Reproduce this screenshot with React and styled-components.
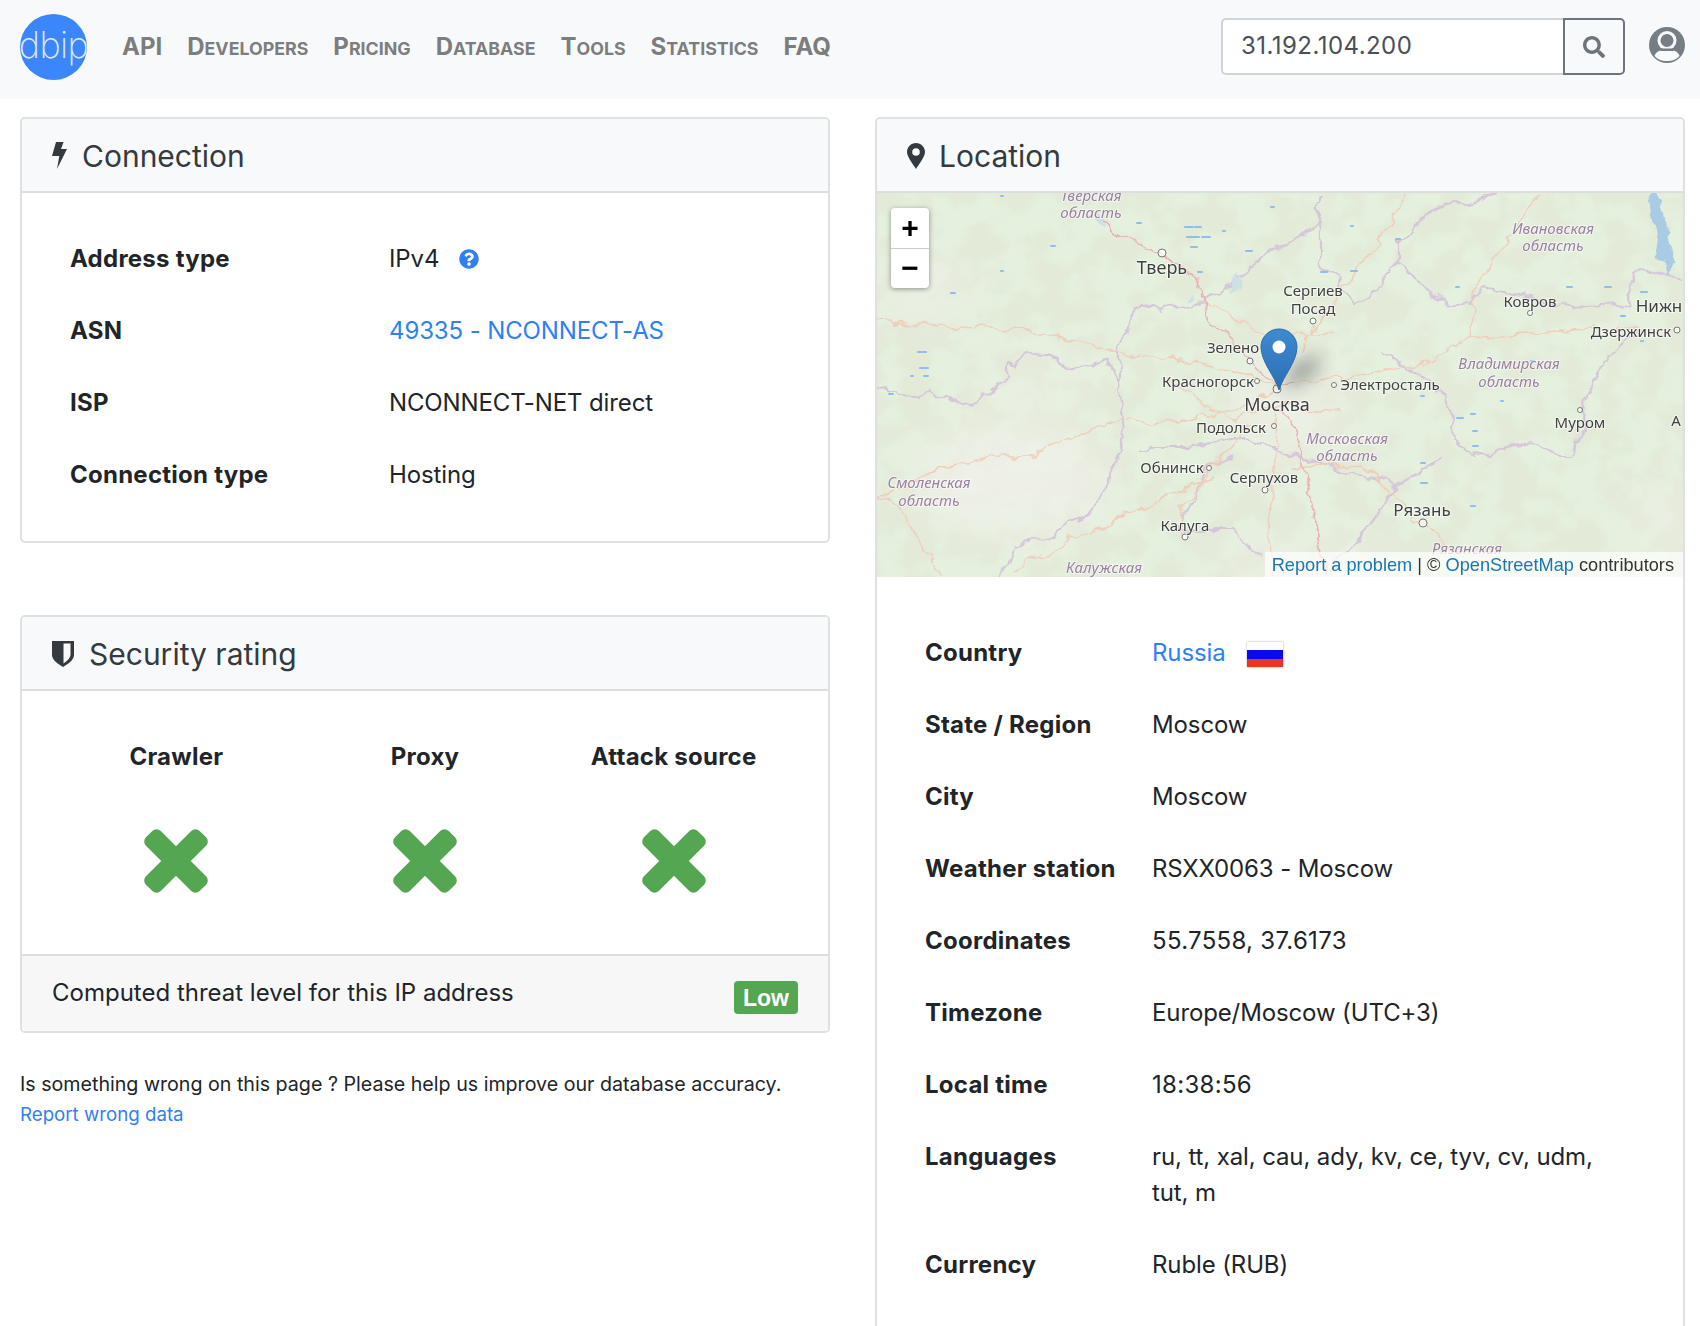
import React from "react";
import styled, { createGlobalStyle } from "styled-components";
import { FaSearch, FaQuestionCircle } from "react-icons/fa";

const Global = createGlobalStyle`
  html, body { margin: 0; padding: 0; background: #fff; }
  body { font-family: Inter, "Liberation Sans", sans-serif; font-size: 24px; line-height: 36px; color: #212529; height: 1326px; overflow: hidden; }
  * { box-sizing: border-box; }
`;

const Navbar = styled.header`
  height: 99px; background: #f8f9fa; display: flex; align-items: center; padding: 0 15px 0 20px;
`;
const Logo = styled.div`
  width: 67px; height: 66px; margin-top: -5px; border-radius: 50%; background: #3b86fb; color: #dfeaff;
  font-size: 36px; font-weight: 200; display: flex; align-items: center; justify-content: center; padding-bottom: 4px; overflow: hidden; flex: none; letter-spacing: -0.6px;
`;
const NavLinks = styled.nav`
  display: flex; gap: 25px; margin-left: 35px; margin-top: -3px; flex: 1; align-items: baseline;
`;
const NavLink = styled.a`
  font-weight: 700; color: #7c7d7e; text-transform: uppercase; font-size: ${(p) => (p.$caps ? 24 : 17.8)}px;
  &::first-letter { font-size: 24px; }
`;
const Search = styled.form`
  display: flex; height: 57px; margin-top: -7px; width: 404px;
`;
const SearchInput = styled.div`
  flex: 1; background: #fff; border: 2px solid #ced4da; border-right: 0; border-radius: 5px 0 0 5px;
  padding: 0 18px; color: #495057; line-height: 51px; letter-spacing: 0.45px;
`;
const SearchButton = styled.div`
  width: 62px; border: 2px solid #6c757d; border-radius: 0 5px 5px 0; display: flex; align-items: center; justify-content: center;
  color: #6c757d; padding-top: 2px;
`;
const Avatar = styled.svg`
  width: 36px; height: 36px; margin-left: 24px; margin-top: -9px; flex: none;
`;

const Main = styled.main`
  display: grid; grid-template-columns: 810px 810px; column-gap: 45px; padding: 18px 15px 0 20px;
`;
const Column = styled.section`
  display: flex; flex-direction: column; min-width: 0;
`;
const Card = styled.article`
  border: 2px solid #dfe0e1; border-radius: 5px; background: #fff; overflow: hidden;
  ${(p) => p.$tall && "height: 1300px;"}
  ${(p) => p.$spaced && "margin-top: 72px;"}
`;
const CardHeader = styled.div`
  height: 74px; background: #f8f9fa; border-bottom: 2px solid #dcdddf; display: flex; align-items: center; padding: 1px 30px 0; gap: ${(p) => p.$gap}px;
`;
const CardTitle = styled.h5`
  margin: 0; font-size: 30px; line-height: 36px; font-weight: 400; color: #343a40;
`;
const CardBody = styled.div`
  padding: 30px;
`;
const InfoBody = styled.div`
  padding: 40px 30px 0;
`;
const InfoRow = styled.div`
  display: grid; grid-template-columns: ${(p) => p.$label}px 1fr; padding: 18px; letter-spacing: -0.12px;
`;
const Label = styled.div`
  font-weight: 700; letter-spacing: 0.25px;
`;
const Value = styled.div`
  display: flex; align-items: center; gap: ${(p) => p.$gap}px;
`;
const NumberValue = styled.span`
  letter-spacing: 0.3px;
`;
const ValueLink = styled.a`
  color: #2f7ff5;
`;
const HelpIcon = styled(FaQuestionCircle)`
  color: #2f7ff5; width: 20px; height: 20px;
`;
const Flag = styled.div`
  width: 36px; height: 25px; box-shadow: 0 0 2px rgba(0,0,0,.35); display: flex; flex-direction: column; margin-top: 3px;
`;
const FlagBand = styled.div`
  flex: 1; background: ${(p) => p.$c};
`;
const RatingGrid = styled.div`
  display: grid; grid-template-columns: repeat(3, 1fr);
`;
const RatingHead = styled.div`
  font-weight: 700; text-align: center; padding: 18px 0; letter-spacing: 0.25px;
`;
const RatingCell = styled.div`
  display: flex; justify-content: center; padding: 36px 0 31px;
`;
const CardFooter = styled.div`
  height: 77px; background: #f7f7f7; border-top: 2px solid #dcdddf; padding: 19px 30px 0; display: flex; justify-content: space-between;
`;
const Badge = styled.span`
  align-self: flex-start; margin-top: 6px; height: 33px; width: 64px; background: #55a653; color: #fff; font-weight: 700; border-radius: 4px;
  text-align: center; line-height: 34px; font-size: 23px; font-family: "Liberation Sans", sans-serif;
`;
const Note = styled.div`
  margin-top: 36px; font-size: 19.65px; line-height: 30px;
`;
const NoteLink = styled.a`
  color: #2f7ff5; display: block; font-size: 18.7px; margin-top: 1px;
`;

const MapBox = styled.div`
  position: relative; height: 384px; overflow: hidden; background: #f0eee9;
`;
const MapArt = styled.svg`
  display: block; width: 806px; height: 384px;
`;
const ZoomControl = styled.div`
  position: absolute; left: 14px; top: 15px; width: 38px; height: 80px; border-radius: 4px; background: #fff;
  box-shadow: 0 1px 5px rgba(0,0,0,.4); display: flex; flex-direction: column;
`;
const ZoomButton = styled.div`
  flex: 1; display: flex; align-items: center; justify-content: center; font-family: "Liberation Sans", sans-serif; font-weight: 700; font-size: 30px; color: #000;
  & + & { border-top: 1px solid #ccc; }
`;
const Attribution = styled.div`
  position: absolute; right: 0; bottom: 0; height: 25px; background: rgba(255,255,255,.7); padding: 0 9px 0 7px;
  font-family: "Liberation Sans", sans-serif; font-size: 18.2px; line-height: 26px; color: #333; white-space: nowrap;
`;
const AttrLink = styled.a`
  color: #1a77b0;
`;

const City = styled.text`
  font-family: "Noto Sans", sans-serif; font-size: ${(p) => p.$s || 15}px; fill: #3f3f3f; text-anchor: middle; paint-order: stroke; stroke: rgba(255,255,255,.6); stroke-width: 2px;
`;
const Region = styled.text`
  font-family: "Noto Sans", sans-serif; font-style: italic; font-size: 15px; fill: #9a7fa0; text-anchor: middle; paint-order: stroke; stroke: rgba(255,255,255,.5); stroke-width: 2px;
`;

const CITIES = [
  ["Тверь", 1162, 274, 18], ["Сергиев", 1313, 296], ["Посад", 1313, 314], ["Ковров", 1530, 307],
  ["Нижн", 1659, 312, 17], ["Дзержинск", 1631, 337], ["Зелено", 1233, 353], ["Красногорск", 1208, 387],
  ["Электросталь", 1390, 390], ["Москва", 1277, 411, 18], ["Подольск", 1231, 433], ["Обнинск", 1172, 473],
  ["Серпухов", 1264, 483], ["Муром", 1580, 428], ["А", 1676, 426], ["Рязань", 1422, 516, 17], ["Калуга", 1185, 531],
];
const REGIONS = [
  ["Тверская", 1091, 201], ["область", 1091, 218], ["Ивановская", 1553, 234], ["область", 1553, 251],
  ["Владимирская", 1509, 369], ["область", 1509, 387], ["Московская", 1347, 444], ["область", 1347, 461],
  ["Смоленская", 929, 488], ["область", 929, 506], ["Рязанская", 1467, 554], ["Калужская", 1104, 573],
];
const DOTS = [
  [1162, 253, 4], [1313, 321, 3], [1530, 313, 2.5], [1677, 330, 3], [1250, 361, 3], [1257, 381, 2.5], [1334, 385, 2.5],
  [1274, 426, 2.5], [1209, 468, 2.5], [1265, 490, 3], [1580, 410, 2.5], [1423, 523, 4], [1185, 537, 3], [1277, 389, 4],
];
const BORDERS = [
  "M877 388L890 387L899 387L902 392L912 395L920 398L927 392L932 396L947 397L955 402L965 403L977 401L985 394L990 392L1004 380L1009 365L1017 365L1022 352L1040 355L1057 360L1070 368L1103 362L1119 383L1124 417L1119 457L1108 483L1092 510L1055 537L1013 543L1002 577",
  "M1119 383L1119 350L1129 313L1145 302L1161 313L1198 303L1230 287L1246 267L1283 247L1320 223L1320 193",
  "M1320 223L1320 267L1341 280L1357 307L1399 263L1431 297L1468 307L1484 287L1521 297L1574 307L1627 303L1638 270L1683 280",
  "M1399 263L1399 240L1431 210L1505 193",
  "M1638 330L1611 357L1585 397L1579 443L1569 457L1521 443L1473 457L1452 437L1447 397L1426 377L1380 350",
  "M1442 457L1399 483L1373 520L1357 543L1336 557L1330 577",
  "M1140 447L1188 447L1235 437L1280 450L1340 470L1399 483",
  "M1235 457L1209 467L1177 530L1230 530L1262 555",
];
const ROADS = [
  "M877 318L939 325L1029 330L1119 353L1198 362L1251 377L1277 387",
  "M877 498L940 469L994 457L1034 457L1077 435L1108 420L1172 423L1241 407L1277 390",
  "M877 498L902 510L939 577",
  "M1293 385L1378 372L1431 360L1468 338L1558 332L1590 330L1680 325",
  "M1468 338L1473 290L1505 243L1540 193",
  "M1299 350L1373 247L1410 193",
  "M1293 467L1362 463L1399 500L1421 523L1447 543L1470 577",
  "M1182 537L1182 507L1209 473L1251 423",
  "M1214 477L1082 533L1013 573",
  "M1277 407L1272 490L1270 577",
  "M1198 300L1277 340L1330 330",
  "M1170 380L1230 420L1280 405L1340 410",
];
const MAJOR = [
  "M1098 220L1135 242L1156 250L1198 280L1209 317L1241 350L1277 387",
  "M1277 407L1293 423L1309 490L1325 577",
  "M1270 390L1293 385",
];
const PONDS = [
  [1184, 226, 10], [1194, 226, 8], [1186, 236, 14], [1201, 236, 10], [1190, 246, 8], [1136, 222, 6], [1197, 271, 6], [1222, 230, 4],
  [1245, 250, 8], [1320, 271, 8], [1395, 238, 6], [1350, 270, 8], [1455, 286, 5], [1566, 286, 7], [1604, 286, 8], [1640, 291, 8],
  [917, 351, 10], [919, 367, 10], [923, 375, 6], [910, 375, 4], [888, 393, 6], [1456, 417, 8], [1472, 430, 6], [1472, 445, 7],
  [1470, 505, 6], [1420, 482, 8], [1420, 462, 6], [1000, 270, 4], [950, 292, 6], [1000, 195, 4], [1050, 245, 6],
  [1500, 400, 4], [1470, 413, 6], [1620, 315, 6], [1640, 340, 4], [1530, 360, 5], [1420, 395, 5], [1350, 225, 4], [1270, 206, 5],
];

function MapDrawing() {
  return (
    <MapArt viewBox="877 193 806 384">
      <defs>
        <filter id="woods" x="0" y="0" width="100%" height="100%">
          <feTurbulence type="fractalNoise" baseFrequency="0.03 0.034" numOctaves="5" seed="7" />
          <feColorMatrix values="0 0 0 0 0.78  0 0 0 0 0.87  0 0 0 0 0.73  0 0 0 8 -3.4" />
          <feGaussianBlur stdDeviation="1.4" />
        </filter>
        <filter id="soft" x="-40%" y="-40%" width="180%" height="180%"><feGaussianBlur stdDeviation="24" /></filter>
        <filter id="shadowBlur" x="-50%" y="-50%" width="200%" height="200%"><feGaussianBlur stdDeviation="9" /></filter>
        <filter id="wobble" x="0" y="0" width="100%" height="100%">
          <feTurbulence type="fractalNoise" baseFrequency="0.05" numOctaves="3" seed="4" result="n" />
          <feDisplacementMap in="SourceGraphic" in2="n" scale="16" xChannelSelector="R" yChannelSelector="G" />
          <feGaussianBlur stdDeviation="0.6" />
        </filter>
        <filter id="textSoft"><feGaussianBlur stdDeviation="0.35" /></filter>
        <linearGradient id="pinFill" x1="0" y1="0" x2="0" y2="1">
          <stop offset="0" stopColor="#3f8ad0" />
          <stop offset="1" stopColor="#2b6fb5" />
        </linearGradient>
      </defs>
      <rect x="877" y="193" width="806" height="384" fill="#f1efea" />
      <rect x="877" y="193" width="806" height="384" fill="#dde8d0" opacity="0.7" />
      <rect x="877" y="193" width="806" height="384" filter="url(#woods)" />
      <g filter="url(#soft)" fill="#f2f0eb">
        <ellipse cx="1010" cy="480" rx="100" ry="55" opacity="0.75" />
        <ellipse cx="1040" cy="380" rx="60" ry="20" opacity="0.4" />
        <ellipse cx="1300" cy="565" rx="110" ry="25" opacity="0.45" />
        <ellipse cx="930" cy="290" rx="45" ry="22" opacity="0.7" />
        <ellipse cx="1285" cy="410" rx="50" ry="50" opacity="0.6" />
        <ellipse cx="1660" cy="520" rx="40" ry="40" opacity="0.4" />
      </g>
      <g fill="none" strokeLinejoin="round" filter="url(#wobble)">
        {BORDERS.map((d, i) => <path key={i} d={d} stroke="#d5c7d9" strokeWidth="2.2" />)}
        {ROADS.map((d, i) => <path key={i} d={d} stroke="#efcdb9" strokeWidth="1.4" />)}
        {MAJOR.map((d, i) => <path key={i} d={d} stroke="#e8b3b4" strokeWidth="1.7" />)}
      </g>
      <path d="M1645 203L1659 193L1664 227L1677 263L1669 277L1659 260L1653 223Z" fill="#a9cce4" filter="url(#wobble)" />
      <path d="M1228 293L1236 272L1242 280L1240 290Z M1184 303L1194 292L1196 300Z M1098 208L1104 218L1100 228L1095 218Z" fill="#cfe0e2" filter="url(#wobble)" />
      {PONDS.map(([x, y, w], i) => <rect key={i} x={x} y={y} width={w} height="2" rx="1" fill="#8fbdec" />)}
      <g filter="url(#textSoft)">
        {DOTS.map(([x, y, r], i) => <circle key={i} cx={x} cy={y} r={r} fill="rgba(255,255,255,.7)" stroke="#777" strokeWidth="1" />)}
        {REGIONS.map(([t, x, y], i) => <Region key={i} x={x} y={y}>{t}</Region>)}
        {CITIES.map(([t, x, y, s], i) => <City key={i} x={x} y={y} $s={s}>{t}</City>)}
      </g>
      <path d="M1279 390L1296 362L1316 356L1322 368L1298 384Z" fill="#222" opacity="0.4" filter="url(#shadowBlur)" />
      <path d="M1279 390C1275 376 1261 362 1261 347C1261 337 1269 329 1279 329C1289 329 1297 337 1297 347C1297 362 1283 376 1279 390Z" fill="url(#pinFill)" stroke="#2c6aa6" strokeWidth="1" />
      <circle cx="1279" cy="347" r="6.5" fill="#fff" />
    </MapArt>
  );
}

const BoltIcon = () => (
  <svg width="15" height="27" viewBox="0 0 15 27"><path d="M4 0H11.6L9 7H15L5 27L7.3 14H0Z" fill="#343a40" /></svg>
);
const ShieldIcon = () => (
  <svg width="22" height="26" viewBox="0 0 22 26">
    <path d="M0 0H22V14C22 19 16 23 11 26C6 23 0 19 0 14Z" fill="#343a40" />
    <path d="M11.5 2.5H18.5V13.5C18.5 17 15 20 11.5 22.5Z" fill="#f8f9fa" />
  </svg>
);
const PinIcon = () => (
  <svg width="18" height="26" viewBox="0 0 18 26">
    <path fillRule="evenodd" d="M9 0C4 0 0 4 0 9C0 14 6 21 9 26C12 21 18 14 18 9C18 4 14 0 9 0ZM9 5.2A3.8 3.8 0 1 1 9 12.8A3.8 3.8 0 1 1 9 5.2Z" fill="#343a40" />
  </svg>
);
const CrossIcon = () => (
  <svg width="64" height="64" viewBox="0 0 64 64" fill="#55a653">
    <rect x="-6" y="21.5" width="76" height="21" rx="6" transform="rotate(45 32 32)" />
    <rect x="-6" y="21.5" width="76" height="21" rx="6" transform="rotate(-45 32 32)" />
  </svg>
);

const CONNECTION = [
  ["Address type", <Value $gap={20} key="a">IPv4 <HelpIcon /></Value>],
  ["ASN", <ValueLink key="b">49335 - NCONNECT-AS</ValueLink>],
  ["ISP", "NCONNECT-NET direct"],
  ["Connection type", "Hosting"],
];
const LOCATION = [
  ["Country", <Value $gap={21} key="a"><ValueLink>Russia</ValueLink><Flag><FlagBand $c="#fff" /><FlagBand $c="#0a0af0" /><FlagBand $c="#ee3322" /></Flag></Value>],
  ["State / Region", "Moscow"],
  ["City", "Moscow"],
  ["Weather station", "RSXX0063 - Moscow"],
  ["Coordinates", <NumberValue key="c">55.7558, 37.6173</NumberValue>],
  ["Timezone", "Europe/Moscow (UTC+3)"],
  ["Local time", <NumberValue key="t">18:38:56</NumberValue>],
  ["Languages", "ru, tt, xal, cau, ady, kv, ce, tyv, cv, udm, tut, m"],
  ["Currency", "Ruble (RUB)"],
];
const NAV = [["API", true], ["Developers"], ["Pricing"], ["Database"], ["Tools"], ["Statistics"], ["FAQ", true]];
const RATINGS = ["Crawler", "Proxy", "Attack source"];

export default function App() {
  return (
    <>
      <Global />
      <Navbar>
        <Logo>dbip</Logo>
        <NavLinks>{NAV.map(([n, c]) => <NavLink key={n} $caps={c}>{n}</NavLink>)}</NavLinks>
        <Search>
          <SearchInput>31.192.104.200</SearchInput>
          <SearchButton><FaSearch size={22} /></SearchButton>
        </Search>
        <Avatar viewBox="0 0 36 36">
          <circle cx="18" cy="18" r="18" fill="#757d85" />
          <path d="M5.5 29C7 24 12 22.5 18 22.5C24 22.5 29 24 30.5 29C27 33 23 34 18 34C13 34 9 33 5.5 29Z" fill="#f8f9fa" />
          <circle cx="18" cy="13.5" r="9.5" fill="#f8f9fa" />
          <circle cx="18" cy="13.5" r="6.5" fill="#757d85" />
          <path d="M9 21.5H27L24 24H12Z" fill="#757d85" />
        </Avatar>
      </Navbar>
      <Main>
        <Column>
          <Card>
            <CardHeader $gap={15}>
              <BoltIcon />
              <CardTitle>Connection</CardTitle>
            </CardHeader>
            <CardBody>
              {CONNECTION.map(([l, v]) => (
                <InfoRow key={l} $label={319}><Label>{l}</Label><div>{v}</div></InfoRow>
              ))}
            </CardBody>
          </Card>
          <Card $spaced>
            <CardHeader $gap={15}>
              <ShieldIcon />
              <CardTitle>Security rating</CardTitle>
            </CardHeader>
            <CardBody>
              <RatingGrid>
                {RATINGS.map((r) => <RatingHead key={r}>{r}</RatingHead>)}
                {RATINGS.map((r) => <RatingCell key={r}><CrossIcon /></RatingCell>)}
              </RatingGrid>
            </CardBody>
            <CardFooter>
              <span>Computed threat level for this IP address</span>
              <Badge>Low</Badge>
            </CardFooter>
          </Card>
          <Note>
            Is something wrong on this page ? Please help us improve our database accuracy.
            <NoteLink>Report wrong data</NoteLink>
          </Note>
        </Column>
        <Column>
          <Card $tall>
            <CardHeader $gap={14}>
              <PinIcon />
              <CardTitle>Location</CardTitle>
            </CardHeader>
            <MapBox>
              <MapDrawing />
              <ZoomControl>
                <ZoomButton>+</ZoomButton>
                <ZoomButton>−</ZoomButton>
              </ZoomControl>
              <Attribution>
                <AttrLink>Report a problem</AttrLink> | © <AttrLink>OpenStreetMap</AttrLink> contributors
              </Attribution>
            </MapBox>
            <InfoBody>
              {LOCATION.map(([l, v]) => (
                <InfoRow key={l} $label={227}><Label>{l}</Label><div>{v}</div></InfoRow>
              ))}
            </InfoBody>
          </Card>
        </Column>
      </Main>
    </>
  );
}
